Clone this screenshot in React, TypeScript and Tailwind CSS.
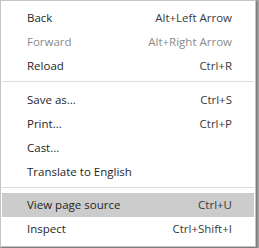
import React from "react";

type Item = { label: string; shortcut?: string; disabled?: boolean; active?: boolean };

const groups: Item[][] = [
  [
    { label: "Back", shortcut: "Alt+Left Arrow" },
    { label: "Forward", shortcut: "Alt+Right Arrow", disabled: true },
    { label: "Reload", shortcut: "Ctrl+R" },
  ],
  [
    { label: "Save as...", shortcut: "Ctrl+S" },
    { label: "Print...", shortcut: "Ctrl+P" },
    { label: "Cast..." },
    { label: "Translate to English" },
  ],
  [
    { label: "View page source", shortcut: "Ctrl+U", active: true },
    { label: "Inspect", shortcut: "Ctrl+Shift+I" },
  ],
];

const Row = ({ item }: { item: Item }) => (
  <div
    className={`mx-[1px] flex h-[24px] items-center justify-between pl-[25px] pr-[22px] ${
      item.active ? "bg-[#cccccc]" : ""
    } ${item.disabled ? "text-[#8b8b8b]" : "text-[#1f1f1f]"}`}
  >
    <span>{item.label}</span>
    {item.shortcut && (
      <span className={item.disabled ? "text-[#8b8b8b]" : "text-[#3a3a3a]"}>{item.shortcut}</span>
    )}
  </div>
);

export default function App() {
  return (
    <div className="h-[248px] w-[259px] overflow-hidden bg-[#a4a4a4]">
      <div
        className="flex h-[247px] w-[256px] flex-col border border-[#c4c4c4] bg-white pt-[5px] text-[11.5px] leading-none shadow-[1px_1px_2px_rgba(0,0,0,0.35)]"
        style={{ fontFamily: "'Open Sans', 'Noto Sans', sans-serif" }}
      >
        {groups.map((g, i) => (
          <React.Fragment key={i}>
            {i > 0 && (
              <div className={`mx-[1px] pt-[3px] ${i === 1 ? "pb-[6px]" : "pb-[5px]"}`}>
                <div className="h-px bg-[#dcdcdc]" />
              </div>
            )}
            {g.map((item) => (
              <Row key={item.label} item={item} />
            ))}
          </React.Fragment>
        ))}
      </div>
    </div>
  );
}
